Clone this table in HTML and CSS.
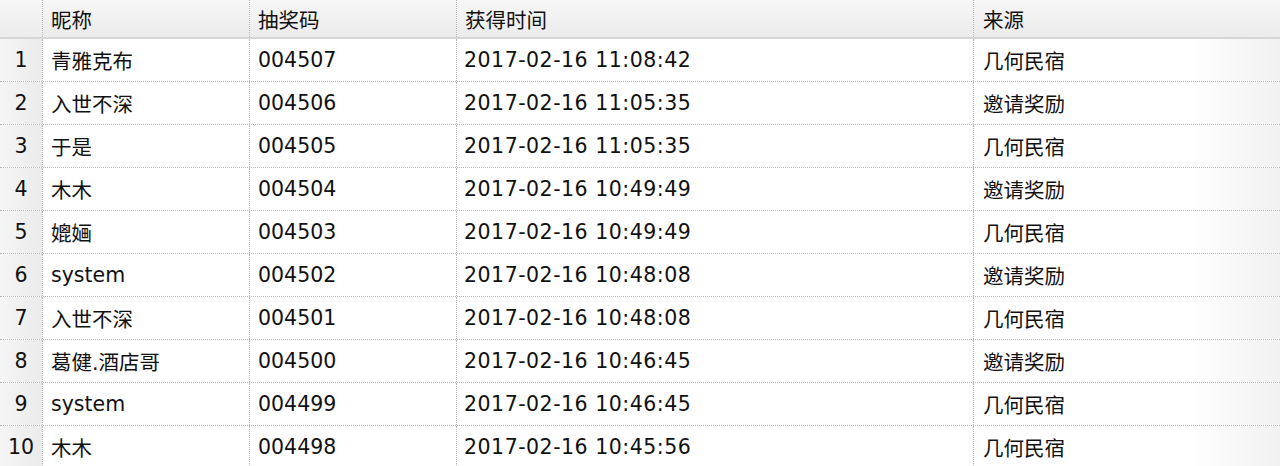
FILE: index.html
```html
<!DOCTYPE html>
<html lang="zh-CN">
<head>
<meta charset="utf-8">
<title>抽奖码列表</title>
<link rel="stylesheet" href="styles.css">
</head>
<body>
<div class="grid">
  <div class="row head">
    <div class="cell num"></div>
    <div class="cell">昵称</div>
    <div class="cell">抽奖码</div>
    <div class="cell">获得时间</div>
    <div class="cell last">来源</div>
  </div>
  <div class="row"><div class="cell num">1</div><div class="cell">青雅克布</div><div class="cell">004507</div><div class="cell time">2017-02-16 11:08:42</div><div class="cell last">几何民宿</div></div>
  <div class="row"><div class="cell num">2</div><div class="cell">入世不深</div><div class="cell">004506</div><div class="cell time">2017-02-16 11:05:35</div><div class="cell last">邀请奖励</div></div>
  <div class="row"><div class="cell num">3</div><div class="cell">于是</div><div class="cell">004505</div><div class="cell time">2017-02-16 11:05:35</div><div class="cell last">几何民宿</div></div>
  <div class="row"><div class="cell num">4</div><div class="cell">木木</div><div class="cell">004504</div><div class="cell time">2017-02-16 10:49:49</div><div class="cell last">邀请奖励</div></div>
  <div class="row"><div class="cell num">5</div><div class="cell">媲婳</div><div class="cell">004503</div><div class="cell time">2017-02-16 10:49:49</div><div class="cell last">几何民宿</div></div>
  <div class="row"><div class="cell num">6</div><div class="cell">system</div><div class="cell">004502</div><div class="cell time">2017-02-16 10:48:08</div><div class="cell last">邀请奖励</div></div>
  <div class="row"><div class="cell num">7</div><div class="cell">入世不深</div><div class="cell">004501</div><div class="cell time">2017-02-16 10:48:08</div><div class="cell last">几何民宿</div></div>
  <div class="row"><div class="cell num">8</div><div class="cell">葛健.酒店哥</div><div class="cell">004500</div><div class="cell time">2017-02-16 10:46:45</div><div class="cell last">邀请奖励</div></div>
  <div class="row"><div class="cell num">9</div><div class="cell">system</div><div class="cell">004499</div><div class="cell time">2017-02-16 10:46:45</div><div class="cell last">几何民宿</div></div>
  <div class="row"><div class="cell num">10</div><div class="cell">木木</div><div class="cell">004498</div><div class="cell time">2017-02-16 10:45:56</div><div class="cell last">几何民宿</div></div>
</div>
</body>
</html>
```

FILE: styles.css
```css
html, body {
  margin: 0;
  padding: 0;
  background: #ffffff;
}
body {
  font-family: "DejaVu Sans", "Noto Sans CJK SC", sans-serif;
  font-size: 20.5px;
  color: #111111;
  overflow: hidden;
}
.grid {
  width: 1280px;
}
.row {
  display: grid;
  grid-template-columns: 43px 207px 207px 517px 1fr;
  height: 43px;
  box-sizing: border-box;
  border-bottom: 1px dotted #b8b8b8;
}
.row.head {
  height: 39px;
  border-bottom: 2px solid #d6d6d6;
  background: linear-gradient(to bottom, #f6f6f6, #ececec);
}
.cell {
  display: flex;
  align-items: center;
  padding-left: 8px;
  border-right: 1px dotted #b8b8b8;
  white-space: nowrap;
}
.cell.time {
  letter-spacing: 0.5px;
  padding-left: 7px;
}
.cell.last {
  border-right: none;
  padding-left: 9px;
}
.row:not(.head) .cell.last {
  background: linear-gradient(to right, #ffffff calc(100% - 90px), #f1f1f1);
}
.cell.num {
  justify-content: center;
  padding-left: 0;
  background: linear-gradient(to right, #f5f5f5, #ebebeb);
}
.row.head .cell.num {
  background: transparent;
}
```
